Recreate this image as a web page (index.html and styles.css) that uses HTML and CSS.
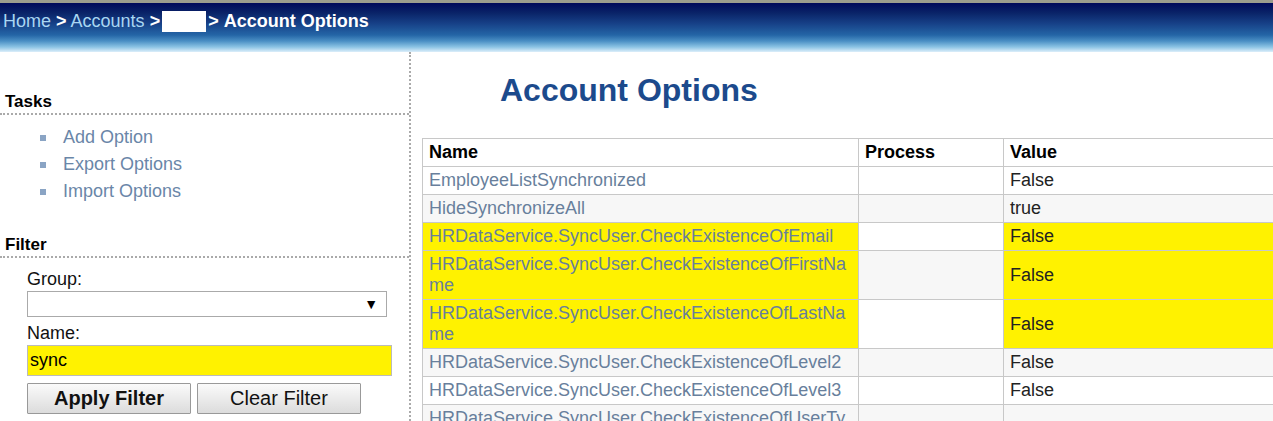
FILE: index.html
```html
<!DOCTYPE html>
<html lang="en">
<head>
    <meta charset="UTF-8">
    <title>Account Options</title>
    <link rel="stylesheet" href="styles.css">
</head>
<body>
    <div class="header">
        <a class="crumb" href="#">Home</a> <span class="sep">&gt;</span>
        <a class="crumb" href="#">Accounts</a> <span class="sep">&gt;</span><span class="redacted"></span><span class="sep">&gt;</span>
        <span class="current">Account Options</span>
    </div>

    <div class="page">
        <div class="sidebar">
            <h3 class="side-title">Tasks</h3>
            <ul class="tasks">
                <li><a href="#">Add Option</a></li>
                <li><a href="#">Export Options</a></li>
                <li><a href="#">Import Options</a></li>
            </ul>

            <h3 class="side-title filter-title">Filter</h3>
            <div class="filter">
                <label class="field-label">Group:</label>
                <div class="select"><span class="arrow">&#9660;</span></div>
                <label class="field-label">Name:</label>
                <input type="text" class="name-input" value="sync">
                <div class="filter-buttons">
                    <button class="btn btn-apply">Apply Filter</button>
                    <button class="btn">Clear Filter</button>
                </div>
            </div>
        </div>

        <div class="content">
            <h1 class="title">Account Options</h1>
            <table class="options">
                <colgroup>
                    <col class="col-name">
                    <col class="col-process">
                    <col class="col-value">
                </colgroup>
                <tr>
                    <th>Name</th>
                    <th>Process</th>
                    <th>Value</th>
                </tr>
                <tr>
                    <td class="name">EmployeeListSynchronized</td>
                    <td></td>
                    <td>False</td>
                </tr>
                <tr class="alt">
                    <td class="name">HideSynchronizeAll</td>
                    <td></td>
                    <td>true</td>
                </tr>
                <tr class="match">
                    <td class="name">HRDataService.SyncUser.CheckExistenceOfEmail</td>
                    <td></td>
                    <td>False</td>
                </tr>
                <tr class="alt match">
                    <td class="name">HRDataService.SyncUser.CheckExistenceOfFirstName</td>
                    <td></td>
                    <td>False</td>
                </tr>
                <tr class="match">
                    <td class="name">HRDataService.SyncUser.CheckExistenceOfLastName</td>
                    <td></td>
                    <td>False</td>
                </tr>
                <tr class="alt">
                    <td class="name">HRDataService.SyncUser.CheckExistenceOfLevel2</td>
                    <td></td>
                    <td>False</td>
                </tr>
                <tr>
                    <td class="name">HRDataService.SyncUser.CheckExistenceOfLevel3</td>
                    <td></td>
                    <td>False</td>
                </tr>
                <tr class="alt">
                    <td class="name">HRDataService.SyncUser.CheckExistenceOfUserType</td>
                    <td></td>
                    <td></td>
                </tr>
            </table>
        </div>
    </div>
</body>
</html>
```

FILE: styles.css
```css
html, body {
    margin: 0;
    height: 100%;
    overflow: hidden;
}

body {
    font-family: "Liberation Sans", Arial, sans-serif;
    background: #fff;
    color: #000;
}

.header {
    height: 49px;
    border-top: 3px solid #9c9c8e;
    padding-left: 3px;
    box-sizing: content-box;
    background: linear-gradient(to bottom,
        #00085a 0px,
        #0a2468 10px,
        #163f86 20px,
        #2465a6 32px,
        #4a8fc4 38px,
        #8cc4e4 44px,
        #dceefa 49px);
    font-size: 18px;
    line-height: 36px;
    color: #fff;
    white-space: nowrap;
}

.crumb {
    color: #a9d6f2;
    text-decoration: none;
}

.sep {
    font-weight: bold;
}

.redacted {
    display: inline-block;
    width: 44px;
    height: 21px;
    background: #fff;
    vertical-align: -5px;
    margin-left: 2px;
    margin-right: 2px;
}

.current {
    font-weight: bold;
}

.page {
    display: flex;
    height: calc(100% - 52px);
}

.sidebar {
    width: 409px;
    flex: none;
    border-right: 2px dotted #aaa;
    padding-top: 40px;
}

.side-title {
    margin: 0;
    padding: 0 0 1px 5px;
    font-size: 17px;
    line-height: 20px;
    border-bottom: 2px dotted #aaa;
}

.tasks {
    list-style: none;
    margin: 9px 0 0;
    padding: 0 0 0 40px;
}

.tasks li {
    font-size: 18px;
    line-height: 27px;
    display: flex;
    align-items: center;
}

.tasks li::before {
    content: "";
    width: 6px;
    height: 6px;
    background: #8aa4c4;
    margin-right: 17px;
}

.tasks a {
    color: #6a86a8;
    text-decoration: none;
}

.filter-title {
    margin-top: 30px;
}

.filter {
    padding: 11px 0 0 27px;
    display: flex;
    flex-direction: column;
    align-items: flex-start;
}

.field-label {
    font-size: 18px;
    line-height: 21px;
    color: #111;
}

.select {
    width: 358px;
    height: 24px;
    border: 1px solid #aaa;
    margin: 1px 0 6px;
    display: flex;
    justify-content: flex-end;
    align-items: center;
}

.arrow {
    font-size: 14px;
    margin-right: 8px;
}

.name-input {
    width: 365px;
    height: 31px;
    box-sizing: border-box;
    margin: 1px 0 7px;
    border: 1px solid #bbb;
    background: #fff200;
    font-family: "Liberation Sans", Arial, sans-serif;
    font-size: 18px;
    padding: 0 2px;
    color: #000;
}

.filter-buttons {
    display: flex;
    gap: 6px;
}

.btn {
    width: 164px;
    height: 31px;
    border: 1px solid #999;
    border-radius: 1px;
    background: linear-gradient(to bottom, #fafafa, #dcdcdc);
    font-family: "Liberation Sans", Arial, sans-serif;
    font-size: 20px;
    color: #111;
    padding: 0;
}

.btn-apply {
    font-weight: bold;
}

.content {
    flex: 1;
    padding: 19px 0 0 11px;
    overflow: hidden;
}

.title {
    margin: 0 0 29px 78px;
    font-size: 32px;
    line-height: 38px;
    color: #1c4a8c;
}

.options {
    border-collapse: collapse;
    table-layout: fixed;
    width: 980px;
    font-size: 18px;
    line-height: 21px;
}

.col-name {
    width: 436px;
}

.col-process {
    width: 145px;
}

.col-value {
    width: 399px;
}

.options th,
.options td {
    border: 1px solid #c8c8c8;
    padding: 3px 6px;
    text-align: left;
    vertical-align: middle;
}

.options th {
    color: #000;
}

.options td {
    color: #222;
    background: #fff;
}

.options .alt td {
    background: #f7f7f7;
}

.options td.name {
    color: #687f9c;
    word-break: break-all;
}

.options .match td:first-child,
.options .match td:last-child {
    background: #fff200;
}
```
